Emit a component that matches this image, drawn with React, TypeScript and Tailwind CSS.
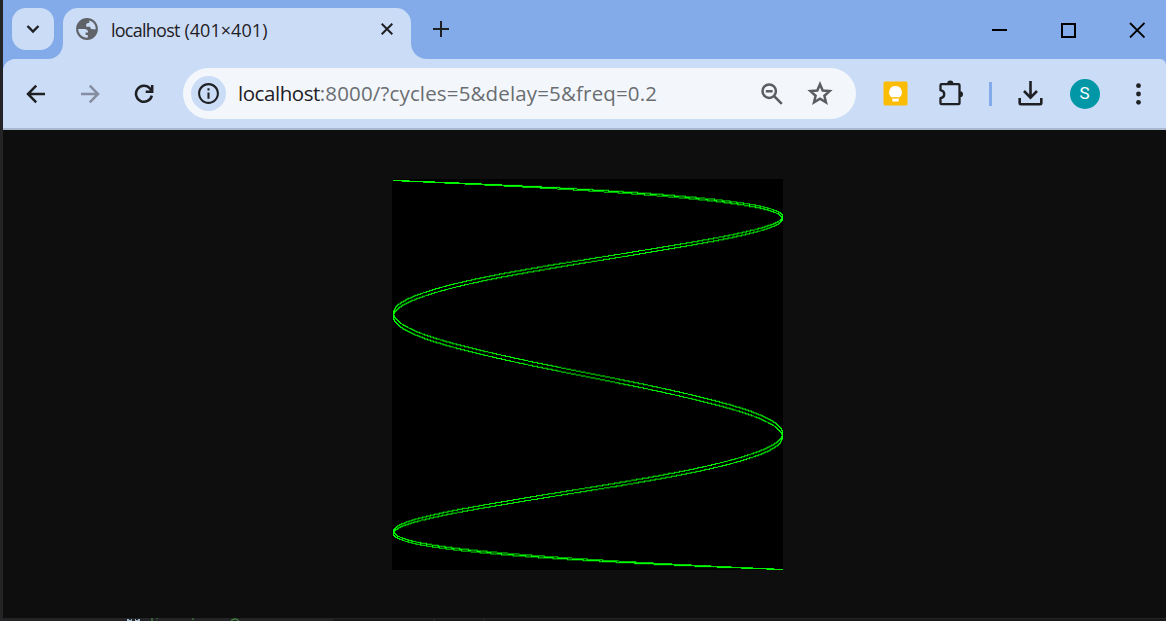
import { useLayoutEffect, useRef } from "react";
import { MdInfoOutline } from "react-icons/md";

const SIZE = 200;
const CYCLES = 5;
const FREQ = 0.2;
const PHASE = 0.01;

function Lissajous() {
  const ref = useRef<HTMLCanvasElement>(null);
  useLayoutEffect(() => {
    const ctx = ref.current!.getContext("2d")!;
    ctx.fillStyle = "#000";
    ctx.fillRect(0, 0, 401, 401);
    ctx.fillStyle = "#00ff00";
    for (let t = 0; t < CYCLES * 2 * Math.PI; t += 0.001) {
      const x = -Math.cos(t);
      const y = -Math.cos(t * FREQ + PHASE);
      ctx.fillRect(SIZE + Math.floor(x * SIZE + 0.5), SIZE + Math.floor(y * SIZE + 0.5), 1, 1);
    }
  }, []);
  return <canvas ref={ref} width={401} height={401} className="block h-[390px] w-[390px]" />;
}

function TabStrip() {
  return (
    <div className="flex h-[59px] bg-[#84abe9]">
      <div className="mt-2 ml-[9px] flex h-[42px] w-[42px] items-center justify-center rounded-[14px] bg-[#cbdcf6]">
        <svg width="14" height="10" viewBox="0 0 14 10" fill="none" stroke="#1f2024" strokeWidth="2.4">
          <path d="M1.5 2 7 7.5 12.5 2" />
        </svg>
      </div>
      <svg className="mt-[43px] -ml-[6px]" width="15" height="16" viewBox="0 0 15 16">
        <path d="M15 0v16H0C9 16 15 9 15 0z" fill="#cbdcf6" />
      </svg>
      <div className="mt-2 flex h-[51px] w-[348px] items-start rounded-t-[15px] bg-[#cbdcf6]">
        <svg className="mt-[10px] ml-[13px] shrink-0" width="22" height="22" viewBox="0 0 22 22">
          <circle cx="11" cy="11" r="10.9" fill="#5f6368" />
          <path d="M13.3 2.5C16 3.200 18.600 5.400 19.400 8.200l.3 3h-3.200c-1.500 0-2.300-1-2.300-2.400h-4V6.700c0-1 .9-1.800 2-1.800h1.100z" fill="#cbdcf6" />
          <path d="M2.200 11h6.300c2.300 0 3.700 1.600 3.700 3.600H9.600v2.300h2.200v2.700C7 20 2.500 16.600 2.200 11z" fill="#cbdcf6" />
        </svg>
        <span className="mt-[9px] ml-[13px] w-[260px] shrink-0 font-['Open_Sans',sans-serif] text-[18px] leading-[26px] tracking-[0.05px] whitespace-nowrap text-[#1f2024]">
          <span className="tracking-[-0.75px]">localhost</span> (401×401)
        </span>
        <svg className="mt-[15px] ml-[10px] shrink-0" width="12" height="12" viewBox="0 0 12 12" stroke="#1f2024" strokeWidth="2">
          <path d="m.7.7 10.6 10.6M11.3.7.7 11.3" />
        </svg>
      </div>
      <svg className="mt-[43px]" width="16" height="16" viewBox="0 0 16 16">
        <path d="M0 0v16h16C7 16 0 9 0 0z" fill="#cbdcf6" />
      </svg>
      <svg className="mt-[21px] ml-[6px]" width="16" height="16" viewBox="0 0 16 16" stroke="#1f2024" strokeWidth="2">
        <path d="M8 0v16M0 8h16" />
      </svg>
      <div className="mt-[22px] mr-[21px] ml-auto flex gap-[53px]">
        <svg width="16" height="16" viewBox="0 0 16 16" stroke="#000" strokeWidth="2">
          <path d="M1 8h15" />
        </svg>
        <svg width="16" height="16" viewBox="0 0 16 16" fill="none" stroke="#000" strokeWidth="2">
          <path d="M2 2h13v13h-13z" />
        </svg>
        <svg width="16" height="16" viewBox="0 0 16 16" stroke="#000" strokeWidth="1.8">
          <path d="m1 1 14.5 14.5m0-14.5-14.5 14.5" />
        </svg>
      </div>
    </div>
  );
}

function Toolbar() {
  return (
    <div className="bg-[#84abe9]">
      <div className="flex h-[71px] items-center rounded-tl-[12px] rounded-tr-[6px] border-b-2 border-[#a9b8cf] bg-[#cbdcf6]">
        <svg className="ml-[23px]" width="20" height="20" viewBox="0 0 20 20" fill="none" stroke="#1f2024" strokeWidth="2.5">
          <path d="M19 10H3M10.2 1.7 2 10l8.2 8.3" />
        </svg>
        <svg className="ml-[34px]" width="20" height="20" viewBox="0 0 20 20" fill="none" stroke="#858d9e" strokeWidth="2.5">
          <path d="M1 10h16M9.8 1.7 18 10l-8.2 8.3" />
        </svg>
        <svg className="ml-[34px]" width="20" height="20" viewBox="0 0 20 20" fill="none" stroke="#1f2024" strokeWidth="2.5">
          <path d="M17.8 11.6A8 8 0 1 1 16 4.5l1.5 2M18.2 1v6.7h-6.5" />
        </svg>
        <div className="ml-[29px] flex h-[51px] w-[673px] items-center rounded-full bg-[#f3f7fc]">
          <div className="ml-[8px] flex h-[35px] w-[35px] items-center justify-center rounded-full bg-[#cbdcf6]">
            <MdInfoOutline className="h-[25px] w-[25px] text-[#1f2024]" />
          </div>
          <div className="-mt-[2px] ml-[12px] w-[521px] font-['Open_Sans',sans-serif] text-[20.5px] leading-[28px] tracking-[0.15px] whitespace-nowrap text-[#6a6d71]">
            <span className="tracking-[-0.45px] text-[#1f2024]">localhost</span>:8000/?cycles=5&amp;delay=5&amp;freq=0.2
          </div>
          <svg className="ml-[2px]" width="22" height="22" viewBox="0 0 22 22" fill="none" stroke="#5a5d61" strokeWidth="2.5">
            <circle cx="8.2" cy="8.2" r="6.7" />
            <path d="m13 13 7.8 7.8M4.8 8.2h6.8" />
          </svg>
          <svg className="-mt-[2px] ml-[24px]" width="26" height="26" viewBox="0 0 26 26" fill="none" stroke="#5a5d61" strokeWidth="2.500">
            <path d="m13 4.200 2.700 6.300 6.900.6-5.200 4.600 1.600 6.700-6-3.600-6 3.600 1.600-6.700-5.200-4.600 6.900-.6z" />
          </svg>
        </div>
        <svg className="ml-[27px]" width="25" height="25" viewBox="0 0 25 25">
          <rect x=".5" y=".5" width="24" height="24" rx="1.5" fill="#fbbc04" />
          <path d="M12.5 5a6.2 6.2 0 0 0-3.5 11.4V18h7v-1.6A6.2 6.2 0 0 0 12.5 5zM9.3 17.5h6.4v3H9.3z" fill="#fff" />
          <path d="M9 16.7h7" stroke="#fbbc04" strokeWidth="1" />
        </svg>
        <svg className="-mt-[3px] ml-[29px]" width="27" height="27" viewBox="0 0 27 27" fill="none" stroke="#1f2024" strokeWidth="2.3" strokeLinejoin="round">
          <path d="M4.500 5.200h17q1 0 1 1v18q0 1-1 1h-17q-1 0-1-1v-5c5-1 5-7 0-8v-5q0-1 1-1z" />
          <path d="M10.200 4.500a3.100 3.100 0 0 1 6.200 0zM23 12.200a3 3 0 0 1 0 6z" fill="#1f2024" stroke="none" />
        </svg>
        <div className="ml-[25px] h-[24px] w-[2.5px] bg-[#84abe9]" />
        <svg className="ml-[26px]" width="25" height="25" viewBox="0 0 25 25" fill="none" stroke="#1f2024" strokeWidth="2.6">
          <path d="M12.500 0v16M6 10l6.500 6.700L19 10M1.700 17v5.200q0 1 1 1h19.600q1 0 1-1V17" />
        </svg>
        <div className="ml-[27px] flex h-[30px] w-[30px] items-center justify-center rounded-full bg-[#0297a7] font-['Roboto',sans-serif] text-[17px] text-white">
          S
        </div>
        <svg className="ml-[36px]" width="5" height="22" viewBox="0 0 5 22" fill="#1f2024">
          <circle cx="2.5" cy="2.7" r="2.4" />
          <circle cx="2.5" cy="11" r="2.4" />
          <circle cx="2.5" cy="19.3" r="2.4" />
        </svg>
      </div>
    </div>
  );
}

export default function App() {
  return (
    <div className="flex h-[621px] w-[1166px] flex-col overflow-hidden bg-[#242427]">
      <div className="ml-[3px] h-[618px] bg-[#0e0e0e]">
        <TabStrip />
        <Toolbar />
        <div className="mt-[49px] ml-[389px] h-[391px] w-[391px] bg-black pt-px pl-px">
          <Lissajous />
        </div>
      </div>
      <div className="flex h-[3px] items-end">
        <svg width="1166" height="3" viewBox="0 0 1166 3">
          <path d="M333 1h100v2H333zM435 1h48v2h-48zM485 1h681v2H485z" fill="#19191b" />
          <path d="M127 1h5v2h-5zM135 1h5v2h-5z" fill="#9eb6c8" />
          <path d="M129 1h2v1h-2zM136 1h2v1h-2z" fill="#18232c" />
          <path d="M152 0v3M157 0v1M193 0v2M231 3q4-4 8 0" fill="none" stroke="#40803f" strokeWidth="1.3" />
        </svg>
      </div>
    </div>
  );
}
